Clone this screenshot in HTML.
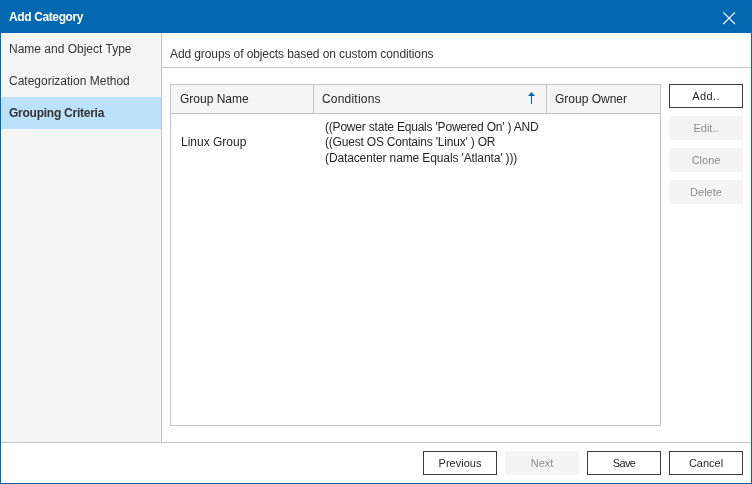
<!DOCTYPE html>
<html><head><meta charset="utf-8">
<style>
*{margin:0;padding:0;box-sizing:border-box}
html,body{width:752px;height:484px;overflow:hidden;background:#fff}
body{position:relative;-webkit-font-smoothing:antialiased;font-family:"Liberation Sans",sans-serif;font-size:12px;color:#262626}
.a{position:absolute;white-space:nowrap;will-change:transform}
#win{position:absolute;left:0;top:0;width:752px;height:484px;border:1px solid #0368b0;border-top:none;background:#fff}
#title{position:absolute;left:0;top:0;width:752px;height:33px;background:#0368b0}
#ttl{left:9px;top:10px;color:#fff;font-weight:bold;font-size:12px;letter-spacing:-0.38px}
#side{position:absolute;left:1px;top:33px;width:160px;height:409px;background:#f5f5f5}
#sideb{position:absolute;left:161px;top:33px;width:1px;height:409px;background:#c4c4c4}
#sel{position:absolute;left:1px;top:97px;width:160px;height:32px;background:#bbe1fb}
.si{left:9px;color:#333}
#hdrsep{position:absolute;left:162px;top:67px;width:589px;height:1px;background:#c4c4c4}
#tbl{position:absolute;left:170px;top:84px;width:491px;height:342px;border:1px solid #c4c4c4;background:#fff}
#th{position:absolute;left:171px;top:85px;width:489px;height:28px;background:#f5f5f5}
#thb{position:absolute;left:171px;top:113px;width:489px;height:1px;background:#c4c4c4}
.cd{position:absolute;top:85px;width:1px;height:28px;background:#c4c4c4}
.btn{position:absolute;will-change:transform;width:74px;height:24px;border:1px solid #3a3a3a;background:#fff;text-align:center;line-height:23px;font-size:11px;color:#262626}
.dis{border-color:#f4f4f4;background:#f4f4f4;color:#8c8c8c}
#botsep{position:absolute;left:1px;top:442px;width:750px;height:1px;background:#c4c4c4}
</style></head><body>
<div id="win"></div>
<div id="title"></div>
<div id="ttl" class="a">Add Category</div>
<svg class="a" style="left:722px;top:11px" width="15" height="15" viewBox="0 0 15 15"><path d="M1.3 1.3 L13 13 M13 1.3 L1.3 13" stroke="#fff" stroke-width="1.1" fill="none"/></svg>

<div id="side"></div>
<div id="sel"></div>
<div id="sideb"></div>
<div class="a si" style="top:42px">Name and Object Type</div>
<div class="a si" style="top:74px">Categorization Method</div>
<div class="a si" style="top:106px;font-weight:bold;letter-spacing:-0.25px">Grouping Criteria</div>

<div class="a" style="left:170px;top:47px;color:#333;letter-spacing:-0.1px">Add groups of objects based on custom conditions</div>
<div id="hdrsep"></div>

<div id="tbl"></div>
<div id="th"></div>
<div id="thb"></div>
<div class="cd" style="left:313px"></div>
<div class="cd" style="left:546px"></div>
<div class="a" style="left:180px;top:92px">Group Name</div>
<div class="a" style="left:322px;top:92px;letter-spacing:0.2px">Conditions</div>
<svg class="a" style="left:527px;top:91px" width="9" height="14" viewBox="0 0 9 14"><path d="M4.5 1 L8 5 L1 5 Z" fill="#0368b0"/><rect x="4" y="4" width="1" height="9" fill="#0368b0"/></svg>
<div class="a" style="left:555px;top:92px">Group Owner</div>

<div class="a" style="left:181px;top:135px">Linux Group</div>
<div class="a" style="left:325px;top:120px;letter-spacing:-0.2px">((Power state Equals 'Powered On' ) AND</div>
<div class="a" style="left:325px;top:135px;letter-spacing:-0.2px">((Guest OS Contains 'Linux' ) OR</div>
<div class="a" style="left:325px;top:151px;letter-spacing:-0.12px">(Datacenter name Equals 'Atlanta' )))</div>

<div class="btn" style="left:669px;top:84px;letter-spacing:0.4px;padding-left:0.4px">Add..</div>
<div class="btn dis" style="left:669px;top:116px">Edit..</div>
<div class="btn dis" style="left:669px;top:148px">Clone</div>
<div class="btn dis" style="left:669px;top:180px">Delete</div>

<div id="botsep"></div>
<div class="btn" style="left:423px;top:451px">Previous</div>
<div class="btn dis" style="left:505px;top:451px">Next</div>
<div class="btn" style="left:587px;top:451px;letter-spacing:-0.6px">Save</div>
<div class="btn" style="left:669px;top:451px">Cancel</div>
</body></html>
